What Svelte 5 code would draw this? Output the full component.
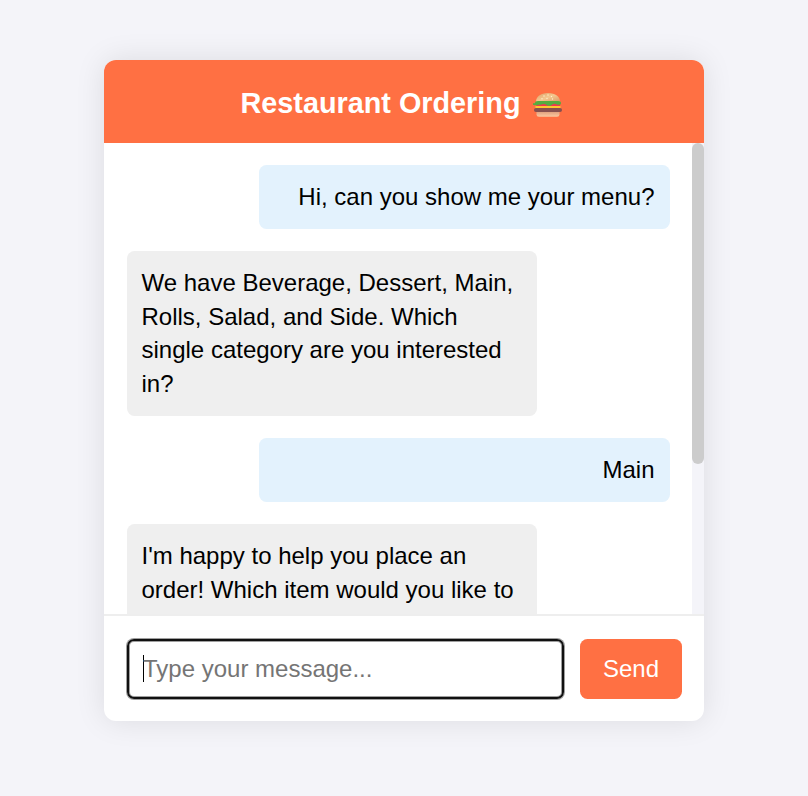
<script>
  const messages = [
    { from: 'user', text: 'Hi, can you show me your menu?' },
    { from: 'bot', text: 'We have Beverage, Dessert, Main, Rolls, Salad, and Side. Which single category are you interested in?' },
    { from: 'user', text: 'Main' },
    { from: 'bot', text: "I'm happy to help you place an order! Which item would you like to" }
  ];
</script>

<main>
  <section class="chat">
    <header>
      <h1>Restaurant Ordering</h1>
      <svg class="burger" viewBox="0 0 30 26" aria-hidden="true">
        <defs>
          <linearGradient id="bun" x1="0" y1="0" x2="1" y2="1">
            <stop offset="0" stop-color="#dda067" />
            <stop offset=".5" stop-color="#f4c78f" />
            <stop offset="1" stop-color="#d99a68" />
          </linearGradient>
          <linearGradient id="base" x1="0" y1="0" x2="0" y2="1">
            <stop offset="0" stop-color="#dc9a78" />
            <stop offset="1" stop-color="#fbc9a0" />
          </linearGradient>
        </defs>
        <path d="M3.5 19h23v3.5q0 2.2-2.5 2.2H6q-2.5 0-2.5-2.2z" fill="url(#base)" />
        <path d="M3 11h24.5l-.7 4H3.5z" fill="#f0384f" />
        <path d="M2.5 14h25v3h-25z" fill="#ffc62e" />
        <rect x="1" y="16" width="28" height="4" rx="2" fill="#87504f" />
        <path d="M3 9.7C3 4.5 7.5 1 15 1s12 3.5 12 8.7z" fill="url(#bun)" />
        <path d="M2 11.2q0-2.2 3-2.2h20q3 0 3 2.2 0 1.6-2 1.6-1.8 0-3.2-.9-1.6-.5-3.1.3-1.8 1.6-3.7 1.6t-3.4-1.5q-1.6-.8-3.3 0-1.4.7-3 .2-1.2.8-2.7.8-4.6 0-4.6-2.1z" fill="#54ad3f" />
        <g fill="#fff0cd">
          <circle cx="11" cy="4" r=".7" /><circle cx="15" cy="3" r=".7" />
          <circle cx="18.5" cy="4.5" r=".7" /><circle cx="9" cy="6.8" r=".7" />
          <circle cx="14" cy="6.5" r=".7" /><circle cx="19.5" cy="7" r=".7" />
        </g>
      </svg>
    </header>
    <div class="body">
      <div class="log">
        {#each messages as m}
          <div class="message {m.from}">{m.text}</div>
        {/each}
      </div>
      <div class="track"><div class="thumb"></div></div>
    </div>
    <footer>
      <div class="field"><span class="caret"></span><span>Type your message...</span></div>
      <button>Send</button>
    </footer>
  </section>
</main>

<style>
  :global(body) { margin: 0; background: #f4f4f9; }
  main {
    height: 796px;
    box-sizing: border-box;
    padding: 60px 104px 75px;
    overflow: hidden;
    font-family: "Liberation Sans", Arial, sans-serif;
    font-size: 24px;
    color: #000;
  }
  .chat {
    height: 661px;
    display: flex;
    flex-direction: column;
    background: #fff;
    border-radius: 12px;
    overflow: hidden;
    box-shadow: 0 0 30px rgba(0, 0, 0, 0.1);
  }
  header {
    flex: 0 0 83px;
    display: flex;
    align-items: center;
    justify-content: center;
    gap: 12px;
    padding: 3px 5px 0 0;
    box-sizing: border-box;
    background: #ff7043;
  }
  h1 { margin: 0; font-size: 28.8px; line-height: 33px; font-weight: bold; color: #fff; }
  .burger { width: 30px; height: 26px; margin-top: 3px; }
  .body { flex: 1; min-height: 0; display: flex; overflow: hidden; }
  .log {
    flex: 1;
    display: flex;
    flex-direction: column;
    gap: 22.5px;
    padding: 22.1px 22.5px 0;
    overflow: hidden;
  }
  .message {
    flex: none;
    width: 70%;
    padding: 15px;
    line-height: 33.6px;
    border-radius: 7.5px;
  }
  .user { align-self: flex-end; text-align: right; background: #e3f2fd; }
  .bot { align-self: flex-start; background: #efefef; }
  .track { width: 12px; background: #f4f4f9; }
  .thumb { height: 321px; border-radius: 6px; background: #ccc; }
  footer {
    flex: 0 0 107px;
    box-sizing: border-box;
    display: flex;
    gap: 16px;
    padding: 23px 22px 22px 23px;
    border-top: 2px solid #eee;
  }
  .field {
    flex: 1;
    display: flex;
    align-items: center;
    padding-left: 14px;
    border: 2px solid #101010;
    border-radius: 7px;
    box-shadow: 0 0 0 1px rgba(16, 16, 16, 0.4), inset 0 0 0 1px rgba(16, 16, 16, 0.4);
    color: #757575;
  }
  .caret { width: 1px; height: 27px; margin: -1px -1px 0 0; background: #000; }
  button {
    width: 102px;
    padding: 0;
    border: 0;
    border-radius: 7.5px;
    background: #ff7043;
    color: #fff;
    font: 24px "Liberation Sans", Arial, sans-serif;
  }
</style>
